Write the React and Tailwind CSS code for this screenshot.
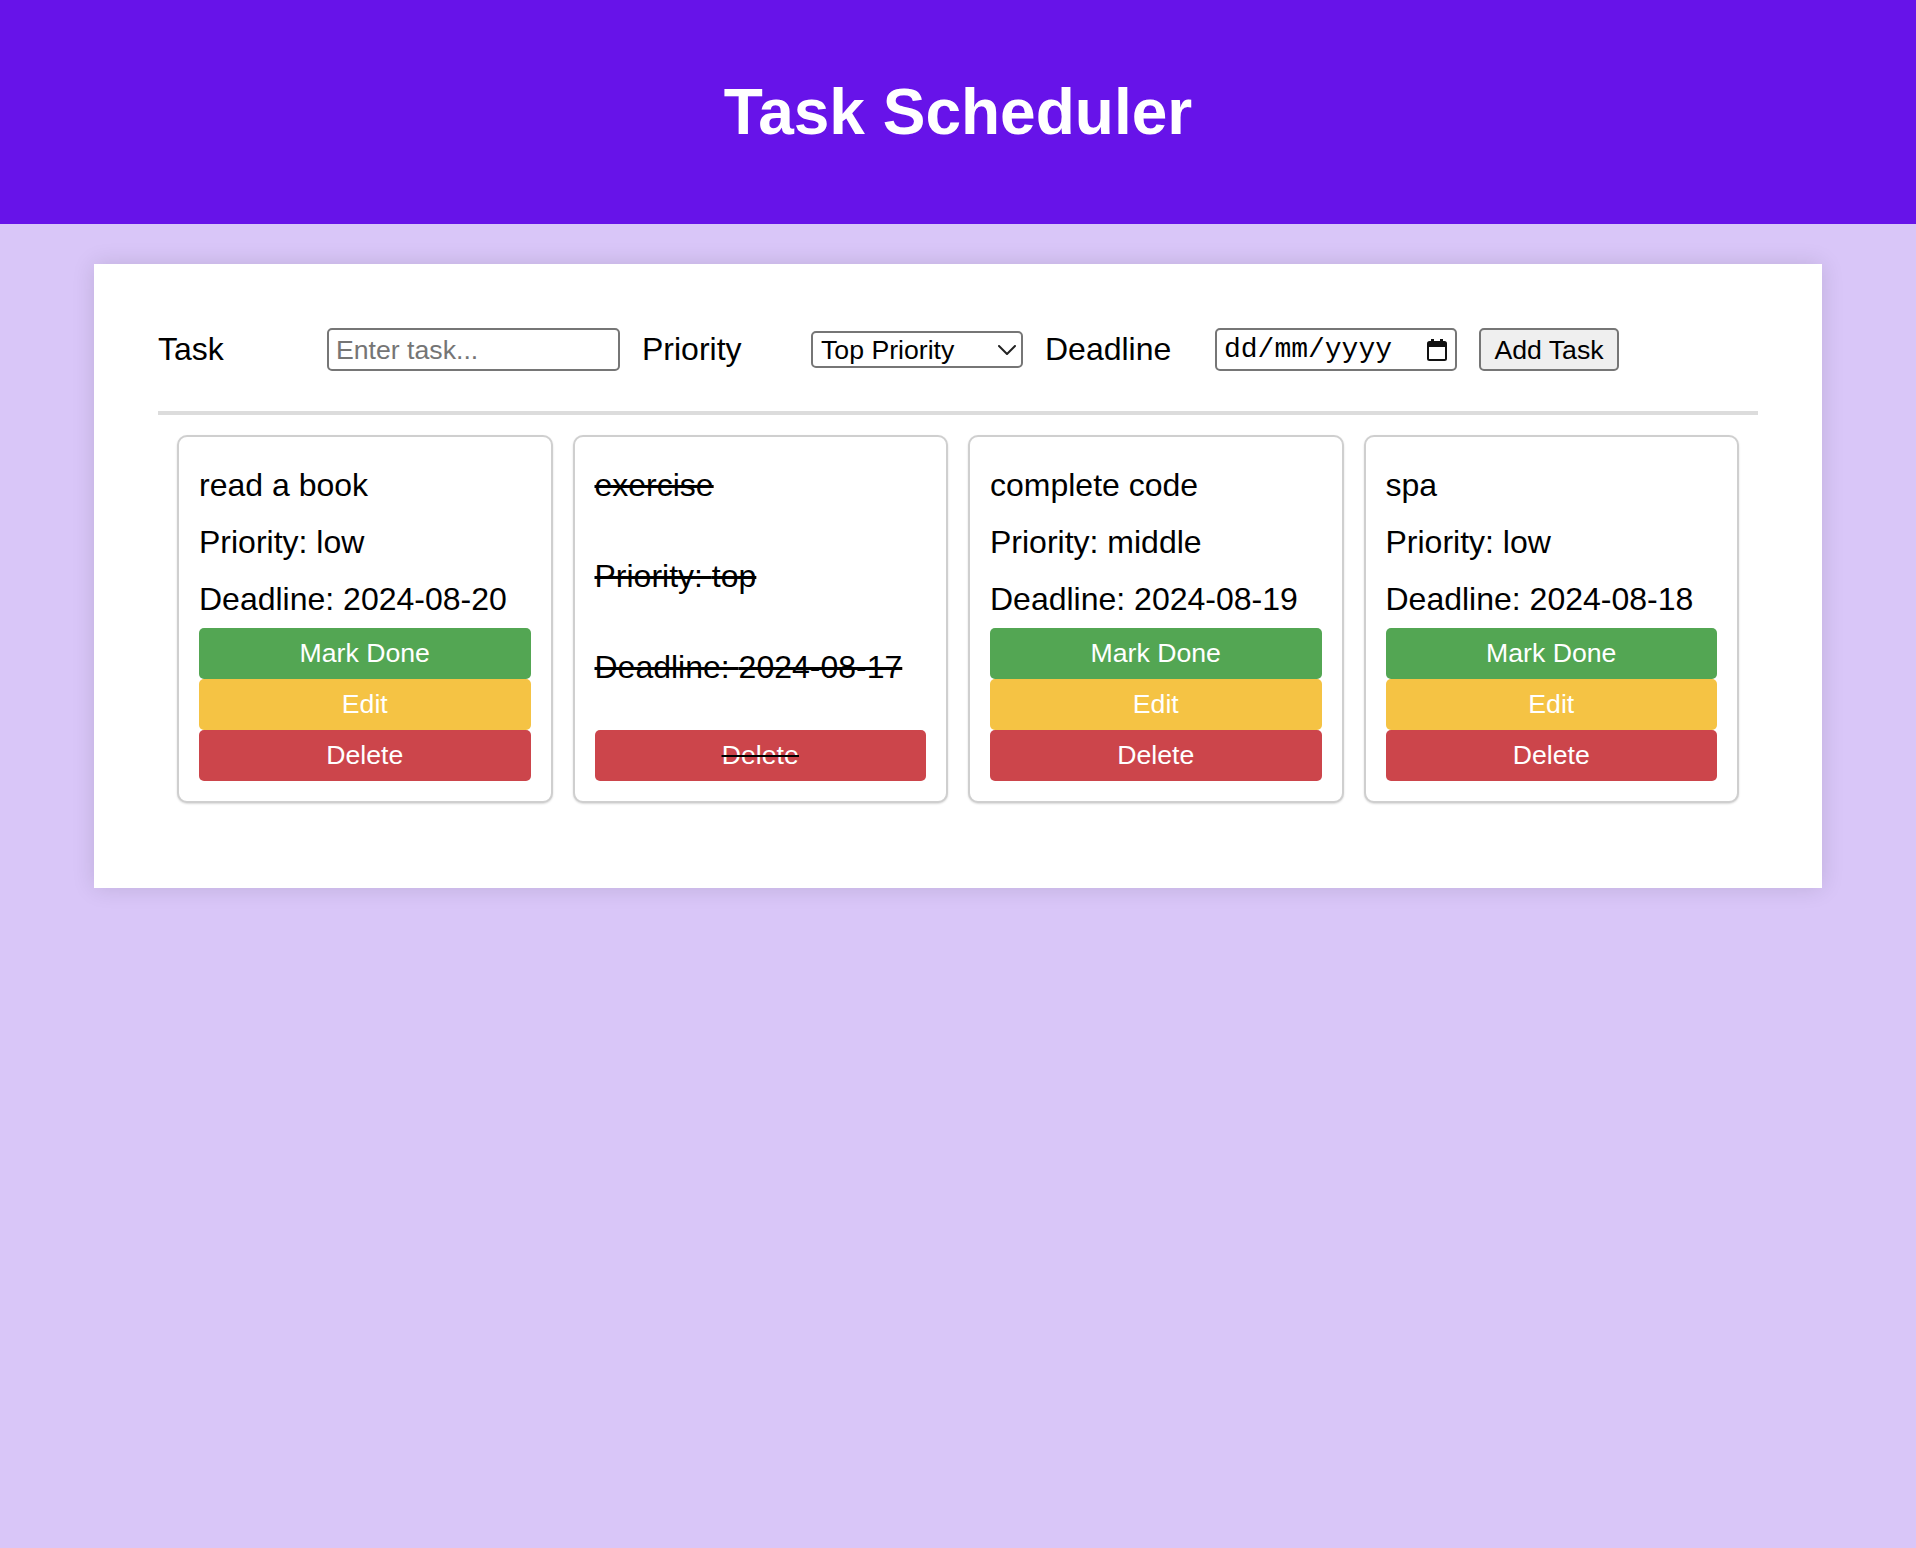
import React from "react";

const tasks = [
  { name: "read a book", priority: "low", deadline: "2024-08-20", done: false },
  { name: "exercise", priority: "top", deadline: "2024-08-17", done: true },
  { name: "complete code", priority: "middle", deadline: "2024-08-19", done: false },
  { name: "spa", priority: "low", deadline: "2024-08-18", done: false },
];

function Chevron() {
  return (
    <svg width="18" height="10" viewBox="0 0 18 10" fill="none">
      <path d="M1 1 L9 9 L17 1" stroke="#222" strokeWidth="2" strokeLinecap="round" strokeLinejoin="round" />
    </svg>
  );
}

function CalendarIcon() {
  return (
    <svg width="20" height="22" viewBox="0 0 20 22" fill="none">
      <rect x="4" y="0" width="3" height="4" fill="#111" />
      <rect x="13" y="0" width="3" height="4" fill="#111" />
      <rect x="1" y="3" width="18" height="18" rx="1.5" stroke="#111" strokeWidth="2" fill="none" />
      <rect x="1" y="3" width="18" height="5" fill="#111" />
    </svg>
  );
}

function TaskCard({ t }) {
  const btn = "w-full h-[51px] rounded-[5px] text-white text-[26.67px] leading-[31px] flex items-center justify-center";
  return (
    <div
      className={
        "flex flex-col justify-between border-2 border-[#cfcfcf] rounded-[10px] p-[20px] bg-white shadow-[0_1px_2px_rgba(0,0,0,0.15)] " +
        (t.done ? "line-through decoration-black" : "")
      }
    >
      <p className="my-[10px] text-[32px] leading-[37px] text-black">{t.name}</p>
      <p className="my-[10px] text-[32px] leading-[37px] text-black">Priority: {t.priority}</p>
      <p className="my-[10px] text-[32px] leading-[37px] text-black">Deadline: {t.deadline}</p>
      {!t.done && <button className={btn + " bg-[#53a653]"}>Mark Done</button>}
      {!t.done && <button className={btn + " bg-[#f5c344]"}>Edit</button>}
      <button className={btn + " bg-[#cc454b] " + (t.done ? "line-through decoration-black" : "")}>Delete</button>
    </div>
  );
}

export default function App() {
  return (
    <div
      className="min-h-screen bg-[#d9c6f8] text-black"
      style={{ fontFamily: '"Liberation Sans", Arial, Helvetica, sans-serif' }}
    >
      <header className="h-[224px] bg-[#6713e9] flex items-center justify-center">
        <h1 className="text-white font-bold text-[64px] leading-[74px]">Task Scheduler</h1>
      </header>

      <main className="w-[1728px] mx-auto mt-[40px] bg-white shadow-[0_0_22px_rgba(0,0,0,0.12)] pt-[64px] px-[64px] pb-[64px]">
        <div className="flex items-center gap-[22px] h-[43px]">
          <label className="w-[147px] text-[32px] leading-[37px]">Task</label>
          <div className="w-[293px] h-[43px] border-2 border-[#767676] rounded-[5px] flex items-center pl-[7px] text-[26.67px] text-[#757575]">
            Enter task...
          </div>
          <label className="w-[147px] text-[32px] leading-[37px]">Priority</label>
          <div className="w-[212px] h-[37px] border-2 border-[#767676] rounded-[5px] flex items-center justify-between pl-[8px] pr-[5px] text-[26.67px]">
            <span>Top Priority</span>
            <Chevron />
          </div>
          <label className="w-[148px] text-[32px] leading-[37px]">Deadline</label>
          <div className="w-[242px] h-[43px] border-2 border-[#767676] rounded-[5px] flex items-center justify-between pl-[7px] pr-[8px] text-[28px]">
            <span style={{ fontFamily: '"Liberation Mono", "Courier New", monospace' }}>dd/mm/yyyy</span>
            <CalendarIcon />
          </div>
          <button className="w-[140px] h-[43px] border-2 border-[#767676] rounded-[5px] bg-[#efefef] text-[26.67px] text-black flex items-center justify-center">
            Add Task
          </button>
        </div>

        <div className="mt-[40px] h-[4px] bg-[#dcdcdc]" />

        <div className="grid grid-cols-4 gap-[20px] px-[19px] pt-[20px] pb-[21px]">
          {tasks.map((t) => (
            <TaskCard key={t.name} t={t} />
          ))}
        </div>
      </main>
    </div>
  );
}
